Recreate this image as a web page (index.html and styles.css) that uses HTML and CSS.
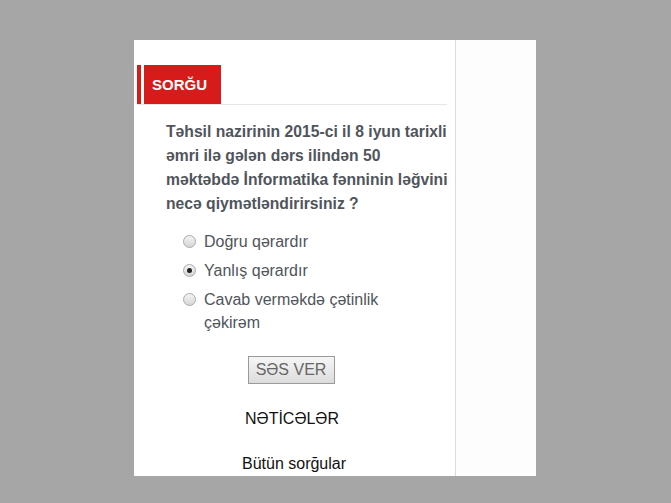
FILE: index.html
```html
<!DOCTYPE html>
<html>
<head>
<meta charset="utf-8">
<link rel="stylesheet" href="styles.css">
</head>
<body>
<div class="panel">
  <div class="main">
    <div class="head">
      <div class="stripe"></div>
      <div class="title">SORĞU</div>
    </div>
    <div class="question">Təhsil nazirinin 2015-ci il 8 iyun tarixli əmri ilə gələn dərs ilindən 50 məktəbdə İnformatika fənninin ləğvini necə qiymətləndirirsiniz ?</div>
    <ul class="options">
      <li><span class="radio"></span><span class="label">Doğru qərardır</span></li>
      <li><span class="radio checked"></span><span class="label">Yanlış qərardır</span></li>
      <li><span class="radio"></span><span class="label">Cavab verməkdə çətinlik çəkirəm</span></li>
    </ul>
    <div class="btnrow"><button class="vote">SƏS VER</button></div>
    <div class="results">NƏTİCƏLƏR</div>
    <div class="all">Bütün sorğular</div>
  </div>
  <div class="side"></div>
</div>
</body>
</html>
```
FILE: styles.css
```css
html, body { margin: 0; padding: 0; }
body {
  background: #a6a6a6;
  font-family: "Liberation Sans", Arial, sans-serif;
  width: 671px;
  height: 503px;
  overflow: hidden;
}
.panel {
  margin: 40px 0 0 134px;
  width: 402px;
  height: 436px;
  background: #fff;
  display: flex;
  overflow: hidden;
}
.main {
  width: 322px;
  border-right: 1px solid #dcdcdc;
  padding: 25px 8px 0 3px;
  box-sizing: border-box;
}
.side { flex: 1; background: #fdfdfd; }
.head {
  display: flex;
  height: 39px;
  border-bottom: 1px solid #e6e6e6;
}
.stripe { width: 4px; background: #d71a1a; margin-right: 3px; }
.title {
  width: 77px;
  background: #d71a1a;
  color: #fff;
  font-weight: bold;
  font-size: 15px;
  line-height: 39px;
  padding-left: 8px;
  box-sizing: border-box;
}
.question {
  margin: 15px 0 0 29px;
  font-size: 15.7px;
  font-weight: bold;
  line-height: 24px;
  color: #50555c;
  width: 285px;
}
.options {
  list-style: none;
  margin: 14px 0 0 46px;
  padding: 0;
  color: #50555c;
  font-size: 16px;
  line-height: 23px;
}
.options li { display: flex; align-items: flex-start; margin-bottom: 6px; }
.radio {
  flex: none;
  width: 13px;
  height: 13px;
  border-radius: 50%;
  border: 1px solid #a9a9a9;
  background: linear-gradient(#f4f4f4, #d6d6d6);
  margin: 5px 8px 0 0;
  box-sizing: border-box;
  position: relative;
}
.radio.checked::after {
  content: "";
  position: absolute;
  left: 3px; top: 3px;
  width: 5px; height: 5px;
  border-radius: 50%;
  background: #222;
}
.label { width: 205px; }
.btnrow { display: flex; justify-content: center; margin-top: 22px; padding-right: 2px; }
.vote {
  font-family: "Liberation Sans", Arial, sans-serif;
  font-size: 16px;
  color: #666;
  width: 87px;
  height: 28px;
  border: 1px solid #9a9a9a;
  background: linear-gradient(#f6f6f6, #dcdcdc);
  padding: 0;
}
.results {
  text-align: center;
  margin-top: 26px;
  font-size: 16px;
  color: #111;
}
.all {
  text-align: center;
  margin-top: 27px;
  padding-left: 4px;
  font-size: 16px;
  color: #111;
}
```
